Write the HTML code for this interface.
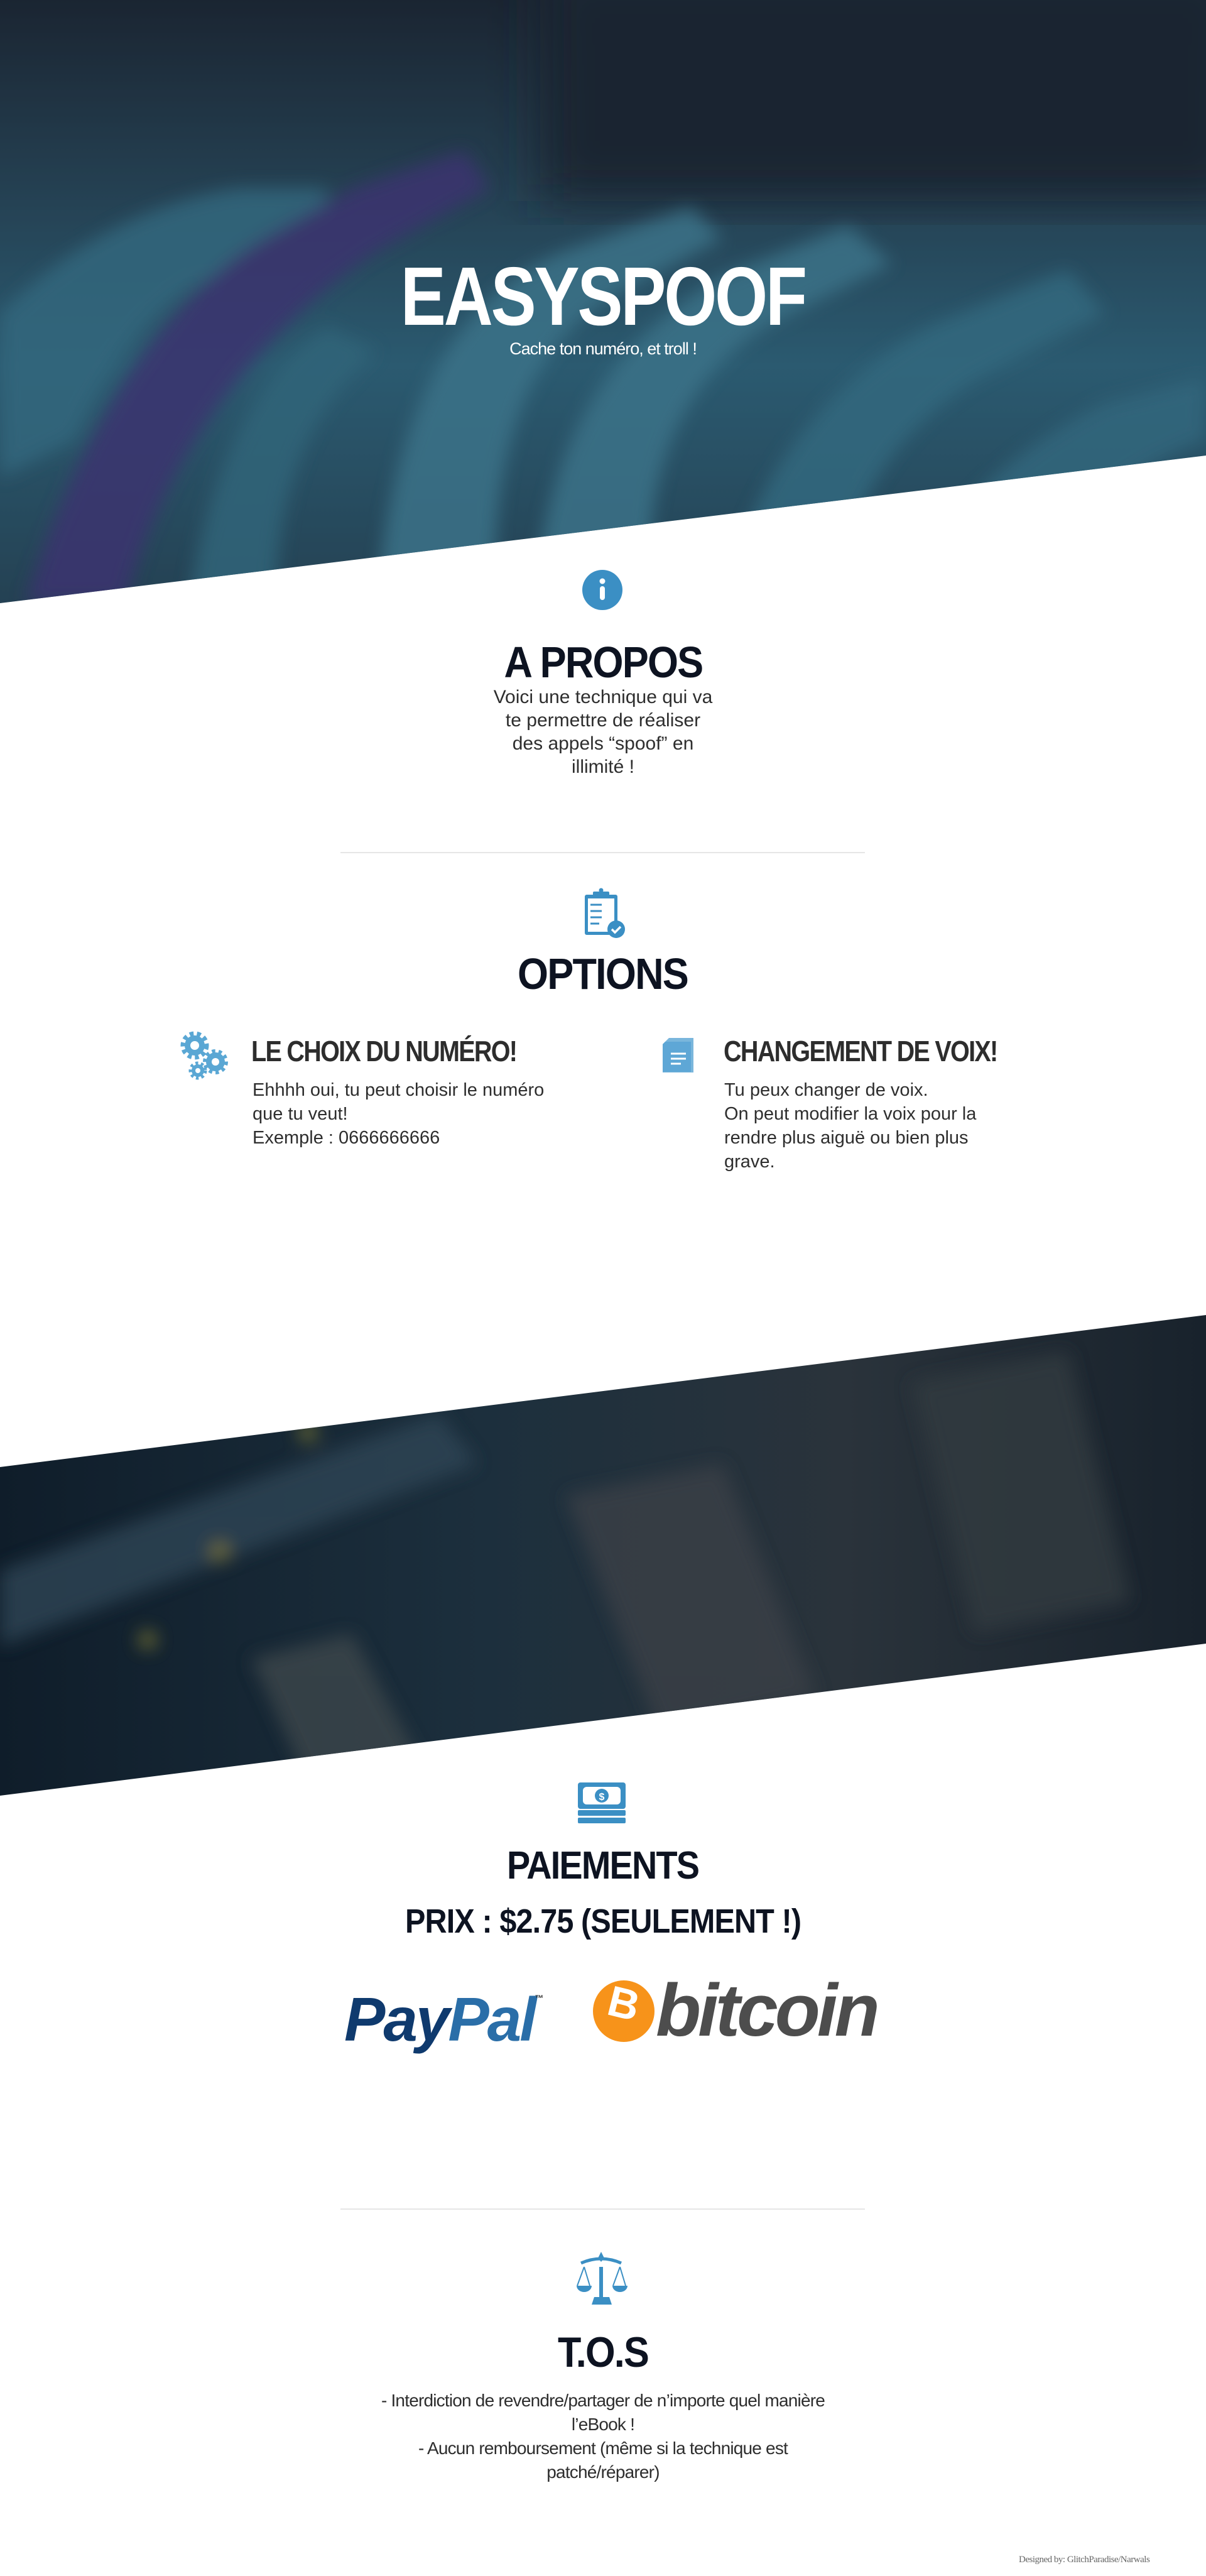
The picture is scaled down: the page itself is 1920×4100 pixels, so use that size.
<!DOCTYPE html>
<html><head><meta charset="utf-8">
<style>
*{margin:0;padding:0;box-sizing:border-box}
body{width:1920px;height:4100px;background:#fff;position:relative;overflow:hidden;font-family:"Liberation Sans",sans-serif;color:#2b2b2b}
.abs{position:absolute}
.h{font-family:"Liberation Sans",sans-serif;font-weight:bold;color:#0d1321;text-align:center;letter-spacing:-2px}
.c{left:0;width:1920px;text-align:center}
p{font-size:29px;line-height:38px;color:#2e2e2e}
</style></head><body>

<svg class="abs" style="left:0;top:0" width="1920" height="4100">
<defs>
<linearGradient id="g1" x1="0" y1="0" x2="0" y2="1">
<stop offset="0" stop-color="#1d2733"/><stop offset="0.3" stop-color="#2a4a5c"/><stop offset="0.6" stop-color="#336e86"/><stop offset="1" stop-color="#2a4c5e"/></linearGradient>
<linearGradient id="g2" x1="0" y1="0" x2="1" y2="0">
<stop offset="0" stop-color="#0f1d2a"/><stop offset="0.4" stop-color="#1c2f3d"/><stop offset="0.7" stop-color="#2a333b"/><stop offset="1" stop-color="#18222c"/></linearGradient>
<filter id="bl"><feGaussianBlur stdDeviation="14"/></filter>
<filter id="bl2"><feGaussianBlur stdDeviation="40"/></filter>
<clipPath id="cp1"><polygon points="0,0 1920,0 1920,725 0,960"/></clipPath>
<clipPath id="cp2"><polygon points="0,2335 1920,2093 1920,2616 0,2858"/></clipPath>
</defs>
<g clip-path="url(#cp1)">
<rect width="1920" height="970" fill="url(#g1)"/>
<rect x="860" y="-60" width="1120" height="380" fill="#1c2530" filter="url(#bl2)"/>
<g filter="url(#bl)" opacity="0.85">
<path d="M0 500 C120 380 250 320 380 300 L520 300 L520 380 C300 420 200 520 120 700 L0 760Z" fill="#3c7f97"/>
<path d="M40 960 C120 700 250 480 420 380 L560 300 L740 240 L780 300 L600 400 C420 520 260 720 200 960Z" fill="#4a3b85"/>
<path d="M600 960 C620 700 700 480 900 400 L1100 330 L1150 380 L980 470 C820 560 780 760 790 960Z" fill="#4a8ea6"/>
<path d="M850 960 C870 720 950 560 1150 440 L1350 360 L1420 420 L1220 520 C1060 620 1020 800 1040 960Z" fill="#4a8ea6"/>
<path d="M1150 960 C1200 760 1300 620 1480 520 L1700 430 L1760 500 L1560 600 C1400 700 1340 840 1340 960Z" fill="#3e8199"/>
<path d="M1450 960 C1500 820 1600 720 1760 640 L1920 600 L1920 700 C1760 760 1680 860 1640 960Z" fill="#3d7f97"/>
<path d="M300 960 C330 760 400 600 520 520 L600 560 C480 660 440 800 440 960Z" fill="#3a7b92"/>
</g>
<rect width="1920" height="970" fill="#13202e" opacity="0.25"/>
</g>
<g clip-path="url(#cp2)">
<rect y="2090" width="1920" height="770" fill="url(#g2)"/>
<g filter="url(#bl)" opacity="0.8">
<path d="M0 2500 L700 2250 L760 2330 L0 2620Z" fill="#2e4554"/>
<path d="M400 2640 L560 2600 L700 2860 L500 2860Z" fill="#3e464c"/>
<path d="M900 2380 L1150 2330 L1300 2700 L1050 2760Z" fill="#3b4046"/>
<path d="M1450 2200 L1700 2150 L1800 2550 L1550 2600Z" fill="#333a40"/>
<circle cx="235" cy="2610" r="14" fill="#8a8232"/>
<circle cx="350" cy="2470" r="14" fill="#8a8232"/>
<circle cx="490" cy="2280" r="14" fill="#8a8232"/>
</g>
</g>
<rect x="542" y="1356" width="835" height="2" fill="#e6e6e6"/>
<rect x="542" y="3515" width="835" height="2" fill="#e6e6e6"/>
<circle cx="959" cy="939" r="32" fill="#3b8fc4"/>
<circle cx="959" cy="925" r="4.5" fill="#fff"/>
<rect x="955" y="933" width="8" height="22" rx="4" fill="#fff"/>
<g fill="#3b8fc4">
<rect x="931" y="1424" width="52" height="64" rx="3"/>
<rect x="944" y="1419" width="26" height="9" rx="2"/>
<circle cx="957" cy="1417" r="3.5"/>
</g>
<rect x="936" y="1430" width="42" height="53" fill="#fff"/>
<g stroke="#3b8fc4" stroke-width="3" fill="none">
<path d="M940 1440 h18 M940 1450 h18 M940 1460 h18 M940 1470 h14"/>
</g>
<circle cx="981" cy="1479" r="14" fill="#3b8fc4"/>
<path d="M974 1479 l5 5 l9 -9" stroke="#fff" stroke-width="3.5" fill="none"/>
<g fill="#5aa7d4">
<circle cx="310" cy="1664" r="18" stroke="#5aa7d4" stroke-width="9" stroke-dasharray="6 5" fill="none"/>
<circle cx="310" cy="1664" r="16"/>
<circle cx="343" cy="1690" r="16" stroke="#5aa7d4" stroke-width="8" stroke-dasharray="5 5" fill="none"/>
<circle cx="343" cy="1690" r="15"/>
<circle cx="315" cy="1704" r="11" stroke="#5aa7d4" stroke-width="7" stroke-dasharray="4 4" fill="none"/>
<circle cx="315" cy="1704" r="10"/>
</g>
<g fill="#fff"><circle cx="310" cy="1664" r="7"/><circle cx="343" cy="1690" r="6"/><circle cx="315" cy="1704" r="4"/></g>
<path d="M1065 1652 h39 v55 h-49 v-45 z" fill="#7ab6dc"/>
<path d="M1059 1658 h41 v48 h-45 v-44z" fill="#5ea7d6"/>
<g stroke="#fff" stroke-width="3"><path d="M1068 1677 h24 M1068 1685 h24 M1068 1693 h16"/></g>
<g fill="#3b8fc4">
<rect x="920" y="2837" width="76" height="42" rx="4"/>
<rect x="920" y="2881" width="76" height="9" rx="2"/>
<rect x="920" y="2893" width="76" height="9" rx="2"/>
</g>
<rect x="928" y="2844" width="60" height="28" rx="6" fill="#fff"/>
<circle cx="958" cy="2858" r="11" fill="#3b8fc4"/>
<text x="958" y="2865" font-size="16" font-weight="bold" fill="#fff" text-anchor="middle" font-family="Liberation Sans">$</text>
<g fill="#3b8fc4" stroke="#3b8fc4">
<path d="M957 3584 l5 10 l-5 6 l-5 -6z" stroke="none"/>
<path d="M925 3602 q32 -14 64 0" stroke-width="5" fill="none"/>
<rect x="954" y="3608" width="6" height="48" stroke="none"/>
<path d="M942 3668 h32 l-4 -12 h-24z" stroke="none"/>
<path d="M930 3608 l-11 30 M930 3608 l9 30 M987 3608 l-11 30 M987 3608 l9 30" stroke-width="2" fill="none"/>
<path d="M918 3638 h24 a12 10 0 0 1 -24 0z M975 3638 h24 a12 10 0 0 1 -24 0z" stroke="none"/>
</g>
<circle cx="993" cy="3201" r="49" fill="#f7931a"/>
</svg>

<div class="abs c" style="top:396px"><span class="h" style="display:inline-block;font-size:132px;color:#fff;transform:scaleX(0.82);letter-spacing:-4px">EASYSPOOF</span></div>
<div class="abs c" style="top:540px;font-size:27px;color:#fff;letter-spacing:-1px">Cache ton numéro, et troll !</div>

<div class="abs c" style="top:1014px"><span class="h" style="display:inline-block;font-size:70px;transform:scaleX(0.9)">A PROPOS</span></div>
<p class="abs c" style="top:1091px;font-size:30px;line-height:37px">Voici une technique qui va<br>te permettre de réaliser<br>des appels “spoof” en<br>illimité !</p>

<div class="abs c" style="top:1510px"><span class="h" style="display:inline-block;font-size:70px;transform:scaleX(0.9)">OPTIONS</span></div>

<div class="abs h" style="left:400px;top:1646px;font-size:46px;color:#2d2d2d;text-align:left;transform:scaleX(0.86);transform-origin:left;white-space:nowrap">LE CHOIX DU NUMÉRO!</div>
<p class="abs" style="left:402px;top:1716px;width:500px">Ehhhh oui, tu peut choisir le numéro<br>que tu veut!<br>Exemple : 0666666666</p>
<div class="abs h" style="left:1152px;top:1646px;font-size:46px;color:#2d2d2d;text-align:left;transform:scaleX(0.86);transform-origin:left;white-space:nowrap">CHANGEMENT DE VOIX!</div>
<p class="abs" style="left:1153px;top:1716px;width:430px">Tu peux changer de voix.<br>On peut modifier la voix pour la<br>rendre plus aiguë ou bien plus<br>grave.</p>

<div class="abs c" style="top:2934px"><span class="h" style="display:inline-block;font-size:62px;transform:scaleX(0.9)">PAIEMENTS</span></div>
<div class="abs c" style="top:3027px"><span class="h" style="display:inline-block;font-size:54px;transform:scaleX(0.9);letter-spacing:-1px">PRIX : $2.75 (SEULEMENT !)</span></div>

<div class="abs" style="left:548px;top:3158px;font-size:98px;font-weight:bold;font-style:italic;letter-spacing:-3px;white-space:nowrap"><span style="color:#0f3a6e">Pay</span><span style="color:#2a6ea8">Pal</span><sup style="font-size:14px;color:#333;font-style:normal;vertical-align:top;position:relative;top:14px">™</sup></div>
<div class="abs" style="left:962px;top:3150px;width:62px;text-align:center;font-size:68px;font-weight:bold;color:#fff;transform:rotate(14deg)">B</div>
<div class="abs" style="left:1044px;top:3132px;font-size:118px;font-weight:bold;font-style:italic;color:#4d4d4d;letter-spacing:-5px">bitcoin</div>

<div class="abs c" style="top:3705px"><span class="h" style="display:inline-block;font-size:68px;transform:scaleX(0.9)">T.O.S</span></div>
<p class="abs c" style="top:3802px;font-size:28px;line-height:38px;letter-spacing:-0.8px">- Interdiction de revendre/partager de n’importe quel manière<br>l’eBook !<br>- Aucun remboursement (même si la technique est<br>patché/réparer)</p>

<div class="abs" style="left:1622px;top:4066px;font-family:'Liberation Serif',serif;font-size:15px;color:#666;white-space:nowrap;letter-spacing:-0.5px">Designed by: GlitchParadise/Narwals</div>
</body></html>
